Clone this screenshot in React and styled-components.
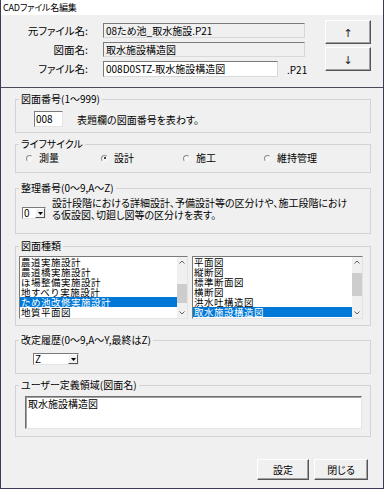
import React from 'react';
import styled, { createGlobalStyle } from 'styled-components';

const GlobalStyle = createGlobalStyle`
  html, body {
    margin: 0;
    padding: 0;
    background: #f0f0f0;
  }
  body {
    font-family: "Noto Sans CJK JP", "Noto Sans", sans-serif;
    font-size: 10px;
    color: #000;
  }
  * {
    box-sizing: border-box;
  }
`;

const Window = styled.div`
  width: 384px;
  height: 489px;
  background: #f0f0f0;
  border: 1px solid #3b3b57;
  border-top: none;
  display: flex;
  flex-direction: column;
  font-feature-settings: "palt";
`;

const TitleBar = styled.div`
  height: 15px;
  background: #fff;
  padding-left: 2px;
  font-size: 9px;
  line-height: 15px;
  letter-spacing: -0.2px;
`;

const TopPanel = styled.div`
  height: 73px;
  display: flex;
  border-bottom: 1px solid #4a4a5c;
`;

const NameGrid = styled.div`
  display: grid;
  grid-template-columns: 87px 202px;
  grid-template-rows: 15px 15px 16px;
  column-gap: 15px;
  row-gap: 4px;
  padding-top: 8px;
`;

const NameLabel = styled.div`
  text-align: right;
  font-size: 10.5px;
  line-height: 15px;
`;

const Field = styled.div`
  height: ${p => (p.$tall ? 16 : 15)}px;
  width: ${p => p.$w || 202}px;
  background: ${p => (p.$disabled ? '#f0f0f0' : '#fff')};
  border: 1px solid;
  border-color: #7a7a7a #d8d8d8 #d8d8d8 #7a7a7a;
  padding-left: 2px;
  line-height: 13px;
  white-space: nowrap;
  overflow: hidden;
`;

const FieldRow = styled.div`
  display: flex;
  align-items: center;
  gap: 9px;
  width: 240px;
`;

const SideButtons = styled.div`
  display: flex;
  flex-direction: column;
  gap: 3px;
  margin-left: 20px;
  padding-top: 5px;
`;

const Button = styled.button`
  width: ${p => p.$w}px;
  height: ${p => p.$h}px;
  padding: 0;
  background: #f0f0f0;
  border: 1px solid;
  border-color: #fff #555 #555 #fff;
  box-shadow: inset -1px -1px 0 #a0a0a0;
  font-family: inherit;
  font-size: ${p => p.$fs || 10}px;
  font-weight: normal;
  color: #000;
  font-feature-settings: "palt";
`;

const Arrow = styled.span`
  font-family: "DejaVu Sans", sans-serif;
  font-size: 11px;
  color: #222;
`;

const Main = styled.div`
  flex: 1;
  display: flex;
  flex-direction: column;
  padding: 11px 12px 0 14px;
`;

const Group = styled.div`
  position: relative;
  width: 356px;
  height: ${p => p.$h}px;
  margin-top: ${p => p.$mt || 0}px;
  border: 1px solid #d3d3d3;
`;

const Legend = styled.span`
  position: absolute;
  top: -8px;
  left: 3px;
  padding: 0 2px;
  background: #f0f0f0;
  line-height: 13px;
  white-space: nowrap;
`;

const NumberRow = styled.div`
  display: flex;
  align-items: center;
  gap: 14px;
  padding: 11px 0 0 18px;
`;

const SmallInput = styled.div`
  width: 29px;
  height: 16px;
  background: #fff;
  border: 1px solid;
  border-color: #7a7a7a #e3e3e3 #e3e3e3 #7a7a7a;
  padding-left: 1px;
  line-height: 14px;
`;

const RadioRow = styled.div`
  display: grid;
  grid-template-columns: 75px 82px 81px auto;
  padding: 7px 0 0 10px;
  line-height: 12px;
`;

const RadioItem = styled.label`
  display: flex;
  align-items: center;
  gap: 6px;
`;

const RadioDot = styled.span`
  position: relative;
  width: 7px;
  height: 7px;
  border-radius: 50%;
  border: 1px solid;
  border-color: #8c8c8c #f4f4f4 #f4f4f4 #8c8c8c;
  background: #f7f7f7;
  &::after {
    content: '';
    display: ${p => (p.$on ? 'block' : 'none')};
    position: absolute;
    left: 1.5px;
    top: 1.5px;
    width: 2px;
    height: 2px;
    border-radius: 50%;
    background: #000;
  }
`;

const SortRow = styled.div`
  display: flex;
  align-items: flex-start;
  padding-left: 6px;
`;

const Combo = styled.div`
  display: flex;
  width: ${p => p.$w}px;
  height: 12px;
  margin-top: ${p => p.$mt}px;
  margin-left: ${p => p.$ml || 0}px;
  background: #fff;
  border: 1px solid;
  border-color: #7a7a7a #e3e3e3 #e3e3e3 #7a7a7a;
`;

const ComboValue = styled.span`
  flex: 1;
  padding-left: 1px;
  line-height: 10px;
`;

const ComboButton = styled.span`
  width: 10px;
  height: 10px;
  display: flex;
  align-items: center;
  justify-content: center;
  background: #f0f0f0;
  border: 1px solid;
  border-color: #fff #555 #555 #fff;
`;

const SortText = styled.p`
  margin: 8px 0 0 6px;
  line-height: 11.6px;
`;

const ListRow = styled.div`
  display: flex;
  gap: 4px;
  padding: 9px 0 0 3px;
`;

const ListBox = styled.div`
  display: flex;
  width: ${p => p.$w}px;
  height: 63px;
  background: #fff;
  border: 1px solid;
  border-color: #7a7a7a #e3e3e3 #e3e3e3 #7a7a7a;
  font-feature-settings: normal;
`;

const Items = styled.div`
  flex: 1;
  overflow: hidden;
`;

const Item = styled.div`
  height: 10px;
  line-height: 10px;
  padding-left: 1px;
  font-size: 9.5px;
  letter-spacing: 0.5px;
  white-space: nowrap;
  background: ${p => (p.$sel ? '#0078d7' : 'transparent')};
  color: ${p => (p.$sel ? '#fff' : '#000')};
`;

const ScrollBar = styled.div`
  position: relative;
  width: 10px;
  background: #f0f0f0;
  display: flex;
  flex-direction: column;
  justify-content: space-between;
  align-items: center;
  padding: 3px 0;
`;

const Thumb = styled.div`
  position: absolute;
  left: 0;
  width: 10px;
  top: ${p => p.$top}px;
  height: ${p => p.$h}px;
  background: #cdcdcd;
`;

const UserBox = styled.div`
  width: 337px;
  height: 33px;
  margin: 10px 0 0 9px;
  background: #fff;
  border: 1px solid;
  border-color: #6e6e6e #e3e3e3 #e3e3e3 #6e6e6e;
  box-shadow: inset 1px 1px 0 #a0a0a0;
  padding: 1px 2px;
  line-height: 12px;
`;

const Footer = styled.div`
  display: flex;
  justify-content: flex-end;
  gap: 5px;
  margin: 22px 3px 0 0;
`;

const Chevron = ({ up }) => (
  <svg width="6" height="4" viewBox="0 0 6 4">
    <path
      d={up ? 'M0.5 3.5 L3 1 L5.5 3.5' : 'M0.5 0.5 L3 3 L5.5 0.5'}
      fill="none"
      stroke="#606060"
      strokeWidth="1"
    />
  </svg>
);

const DownTri = () => (
  <svg width="5" height="3" viewBox="0 0 5 3">
    <path d="M0 0 L5 0 L2.5 3 Z" fill="#000" />
  </svg>
);

const kinds = [
  '農道実施設計',
  '農道橋実施設計',
  'ほ場整備実施設計',
  '地すべり実施設計',
  'ため池改修実施設計',
  '地質平面図',
];

const drawings = ['平面図', '縦断図', '標準断面図', '横断図', '洪水吐構造図', '取水施設構造図'];

const List = ({ w, items, selected, thumbTop, thumbH }) => (
  <ListBox $w={w}>
    <Items>
      {items.map(item => (
        <Item key={item} $sel={item === selected}>
          {item}
        </Item>
      ))}
    </Items>
    <ScrollBar>
      <Chevron up />
      <Thumb $top={thumbTop} $h={thumbH} />
      <Chevron />
    </ScrollBar>
  </ListBox>
);

const Radio = ({ on, children }) => (
  <RadioItem>
    <RadioDot $on={on} />
    {children}
  </RadioItem>
);

const App = () => (
  <>
    <GlobalStyle />
    <Window>
      <TitleBar>CADファイル名編集</TitleBar>
      <TopPanel>
        <NameGrid>
          <NameLabel>元ファイル名:</NameLabel>
          <Field $disabled>08ため池_取水施設.P21</Field>
          <NameLabel>図面名:</NameLabel>
          <Field $disabled>取水施設構造図</Field>
          <NameLabel>ファイル名:</NameLabel>
          <FieldRow>
            <Field $tall $w={175}>008D0STZ-取水施設構造図</Field>
            <span>.P21</span>
          </FieldRow>
        </NameGrid>
        <SideButtons>
          <Button $w={46} $h={24}><Arrow>↑</Arrow></Button>
          <Button $w={46} $h={24}><Arrow>↓</Arrow></Button>
        </SideButtons>
      </TopPanel>

      <Main>
        <Group $h={34}>
          <Legend>図面番号(1～999)</Legend>
          <NumberRow>
            <SmallInput>008</SmallInput>
            <span>表題欄の図面番号を表わす。</span>
          </NumberRow>
        </Group>

        <Group $h={29} $mt={11}>
          <Legend>ライフサイクル</Legend>
          <RadioRow>
            <Radio>測量</Radio>
            <Radio on>設計</Radio>
            <Radio>施工</Radio>
            <Radio>維持管理</Radio>
          </RadioRow>
        </Group>

        <Group $h={46} $mt={15}>
          <Legend>整理番号(0～9,A～Z)</Legend>
          <SortRow>
            <Combo $w={24} $mt={18}>
              <ComboValue>0</ComboValue>
              <ComboButton>
                <DownTri />
              </ComboButton>
            </Combo>
            <SortText>
              設計段階における詳細設計、予備設計等の区分けや、施工段階におけ
              <br />
              る仮設図、切廻し図等の区分けを表す。
            </SortText>
          </SortRow>
        </Group>

        <Group $h={80} $mt={12}>
          <Legend>図面種類</Legend>
          <ListRow>
            <List w={169} items={kinds} selected="ため池改修実施設計" thumbTop={27} thumbH={19} />
            <List w={171} items={drawings} selected="取水施設構造図" thumbTop={16} thumbH={23} />
          </ListRow>
        </Group>

        <Group $h={34} $mt={14}>
          <Legend>改定履歴(0～9,A～Y,最終はZ)</Legend>
          <Combo $w={46} $mt={12} $ml={17}>
            <ComboValue>Z</ComboValue>
            <ComboButton>
              <DownTri />
            </ComboButton>
          </Combo>
        </Group>

        <Group $h={52} $mt={11}>
          <Legend>ユーザー定義領域(図面名)</Legend>
          <UserBox>取水施設構造図</UserBox>
        </Group>

        <Footer>
          <Button $w={52} $h={21}>設定</Button>
          <Button $w={54} $h={21}>閉じる</Button>
        </Footer>
      </Main>
    </Window>
  </>
);

export default App;
